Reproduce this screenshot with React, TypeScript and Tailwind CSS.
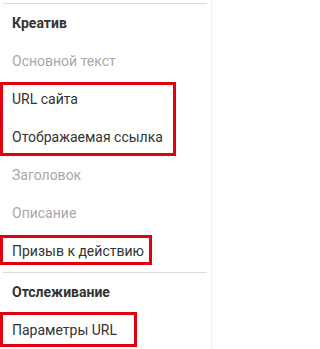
import React from "react";

type Item = { label: string; active: boolean };

const font = { fontFamily: "Roboto, 'Liberation Sans', Arial, sans-serif" };

function Row({ item }: { item: Item }) {
  return (
    <div
      className={`flex h-[38px] items-center pl-[12px] text-[14px] ${
        item.active ? "text-[#333333]" : "text-[#a8a8a8]"
      }`}
    >
      {item.label}
    </div>
  );
}

function Header({ title }: { title: string }) {
  return (
    <div className="flex h-[38px] items-center pl-[12px] text-[14px] font-bold text-[#333333]">
      {title}
    </div>
  );
}

export default function App() {
  return (
    <div className="flex h-[349px] w-[213px] bg-white" style={font}>
      <div className="h-full w-[212px] border-r border-[#f0f0f0]">
        <div className="mt-[3px] ml-[3px] h-px w-[204px] bg-[#dcdcdc]" />

        <Header title="Креатив" />
        <Row item={{ label: "Основной текст", active: false }} />

        {/* highlighted group */}
        <div className="relative">
          <Row item={{ label: "URL сайта", active: true }} />
          <Row item={{ label: "Отображаемая ссылка", active: true }} />
          <div className="absolute left-0 top-[2px] h-[74px] w-[176px] border-[3px] border-[#e2000f]" />
        </div>

        <Row item={{ label: "Заголовок", active: false }} />
        <Row item={{ label: "Описание", active: false }} />

        <div className="relative">
          <Row item={{ label: "Призыв к действию", active: true }} />
          <div className="absolute left-0 top-[3px] h-[30px] w-[152px] border-[3px] border-[#e2000f]" />
        </div>

        <div className="mt-[2px] ml-[3px] h-px w-[204px] bg-[#dcdcdc]" />

        <Header title="Отслеживание" />
        <div className="relative">
          <Row item={{ label: "Параметры URL", active: true }} />
          <div className="absolute left-0 top-[1px] h-[35px] w-[137px] border-[3px] border-[#e2000f]" />
        </div>
      </div>
    </div>
  );
}
